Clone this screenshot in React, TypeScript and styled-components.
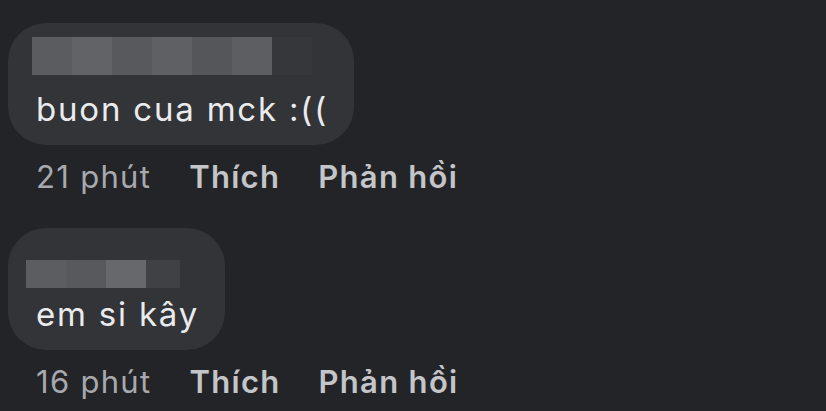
import styled, { createGlobalStyle } from "styled-components";

const Global = createGlobalStyle`
  html, body {
    margin: 0;
    background: #232427;
  }
  body {
    font-family: Inter, "Noto Sans", sans-serif;
    -webkit-font-smoothing: antialiased;
  }
`

const Page = styled.div`
  width: 826px;
  height: 411px;
  box-sizing: border-box;
  padding: 23px 0 0 8px;
  display: flex;
  flex-direction: column;
  gap: 33px;
  overflow: hidden;
`

const Comment = styled.div`
  display: flex;
  flex-direction: column;
  align-items: flex-start;
  gap: 14px;
`

const Bubble = styled.div`
  background: #333438;
  border-radius: 38px;
  padding: 14px 26px 18px 28px;
  display: flex;
  flex-direction: column;
`

const NameRow = styled.div<{ $top: number; $left: number }>`
  height: 54px;
  box-sizing: border-box;
  padding-top: ${p => p.$top}px;
  margin-left: ${p => p.$left}px;
  display: flex;
`

const Pixel = styled.div<{ $h: number; $w: number; $c: string }>`
  width: ${p => p.$w}px;
  height: ${p => p.$h}px;
  background: ${p => p.$c};
`

const Text = styled.div`
  color: #eaebed;
  font-size: 33px;
  line-height: 36px;
  letter-spacing: 1.8px;
  white-space: nowrap;
`

const Meta = styled.div`
  display: flex;
  gap: 38px;
  margin-left: 28px;
  font-size: 31px;
  line-height: 36px;
  letter-spacing: 1.3px;
  white-space: nowrap;
`

const Action = styled.span<{ $bold?: boolean }>`
  font-weight: ${p => (p.$bold ? 600 : 400)};
  color: ${p => (p.$bold ? "#c3c5c9" : "#a7a9ae")};
`

const comments = [
  {
    text: "buon cua mck :((",
    time: "21 phút",
    top: 0,
    left: -4,
    h: 38,
    blocks: ["#5b5c60", "#626367", "#58595d", "#5f6064", "#55565a", "#5d5e62", "#36373b"],
  },
  {
    text: "em si kây",
    time: "16 phút",
    top: 18,
    left: -10,
    h: 28,
    blocks: ["#5c5d61", "#58595d", "#67686c", "#404145"],
  },
];

function App() {
  return (
    <>
      <Global />
      <Page>
        {comments.map(c => (
          <Comment key={c.time}>
            <Bubble>
              <NameRow $top={c.top} $left={c.left}>
                {c.blocks.map((b, i) => (
                  <Pixel key={i} $w={i === c.blocks.length - 1 && c.blocks.length === 4 ? 34 : 40} $h={c.h} $c={b} />
                ))}
              </NameRow>
              <Text>{c.text}</Text>
            </Bubble>
            <Meta>
              <Action>{c.time}</Action>
              <Action $bold>Thích</Action>
              <Action $bold>Phản hồi</Action>
            </Meta>
          </Comment>
        ))}
      </Page>
    </>
  )
}

export default App;
